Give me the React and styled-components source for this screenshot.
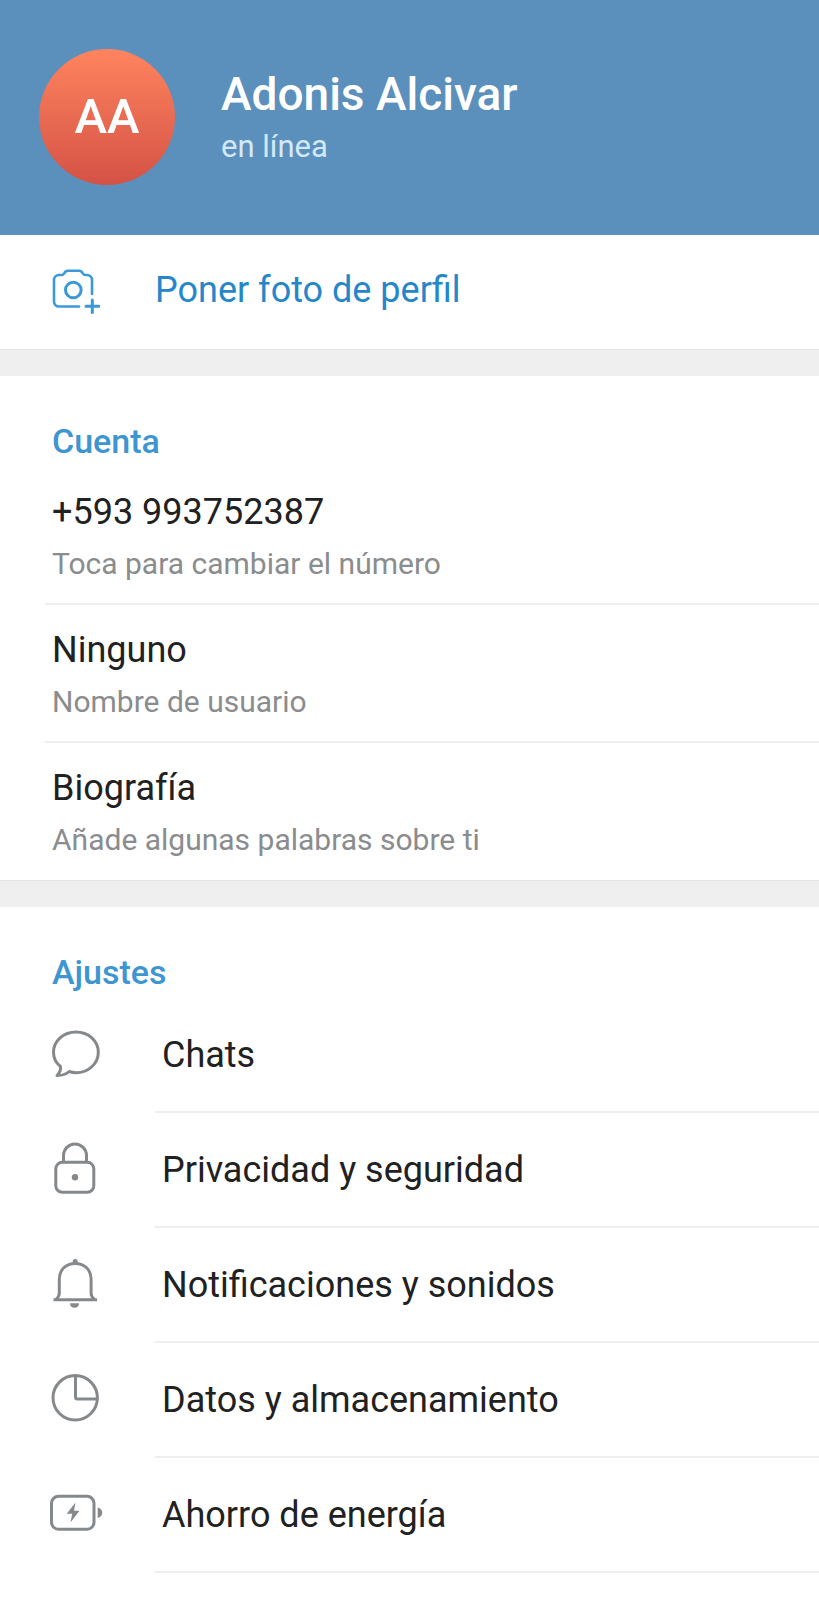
import React from "react";
import styled, { createGlobalStyle } from "styled-components";

const GlobalStyle = createGlobalStyle`
  *, *::before, *::after { box-sizing: border-box; }
  body {
    margin: 0;
    background: #ffffff;
    color: #212121;
    font-family: Roboto, "Liberation Sans", sans-serif;
  }
  h1, h2, p, ul { margin: 0; padding: 0; }
`;

const Page = styled.div`
  min-height: 100vh;
  background: #ffffff;
`;

const Header = styled.header`
  display: flex;
  align-items: center;
  gap: 46px;
  height: 235px;
  padding: 0 39px 2px;
  background: #5b8fbc;
  color: #ffffff;
`;

const Avatar = styled.div`
  flex: none;
  display: grid;
  place-items: center;
  width: 136px;
  height: 136px;
  border-radius: 50%;
  background: linear-gradient(#ff845e, #d45246);
  font-size: 49px;
  font-weight: 500;
  line-height: 56px;
`;

const Identity = styled.div`
  display: flex;
  flex-direction: column;
  gap: 4px;
`;

const Name = styled.h1`
  font-size: 46px;
  font-weight: 500;
  line-height: 56px;
`;

const Status = styled.p`
  font-size: 31px;
  line-height: 42px;
  color: #d3e9fa;
`;

const Section = styled.section`
  border-bottom: 26px solid #efefef;
  box-shadow: inset 0 -1px #e4e4e4;
  &:last-child { border-bottom: 0; box-shadow: none; }
`;

const SectionTitle = styled.h2`
  padding: 44px 52px 5px;
  font-size: 34px;
  font-weight: 500;
  line-height: 42px;
  color: #3d95d1;
`;

const RowButton = styled.button`
  display: block;
  width: 100%;
  margin: 0;
  padding: 0;
  border: 0;
  background: none;
  color: inherit;
  font: inherit;
  text-align: left;
  cursor: pointer;
`;

const PhotoButton = styled(RowButton)`
  display: flex;
  align-items: center;
  gap: 49px;
  height: 115px;
  padding: 0 46px 6px;
  font-size: 36px;
  line-height: 48px;
  color: #2587c9;
`;

const List = styled.ul`
  list-style: none;
`;

const FieldItem = styled.li`
  margin-left: 45px;
  border-bottom: 2px solid #eeeeee;
  &:last-child { border-bottom-color: transparent; }
`;

const FieldButton = styled(RowButton)`
  display: flex;
  flex-direction: column;
  gap: 8px;
  padding: 21px 7px 19px;
`;

const FieldValue = styled.span`
  font-size: 36px;
  line-height: 48px;
`;

const FieldHint = styled.span`
  font-size: 30px;
  line-height: 40px;
  color: #8a8c8e;
`;

const SettingButton = styled(RowButton)`
  display: flex;
  align-items: center;
  padding-left: 46px;
`;

const SettingLabel = styled.span`
  flex: 1;
  display: flex;
  align-items: center;
  height: 115px;
  margin-left: 49px;
  padding-left: 7px;
  border-bottom: 2px solid #eeeeee;
  font-size: 36px;
  line-height: 48px;
`;

const Icon = styled.svg.attrs({ viewBox: "0 0 60 60", "aria-hidden": true })`
  flex: none;
  width: 60px;
  height: 60px;
  fill: none;
  stroke: ${(p) => p.$color || "#85898c"};
  stroke-width: 3;
  stroke-linejoin: round;
  .solid { fill: #85898c; stroke: none; }
`;

const CameraIcon = () => (
  <Icon $color="#3b99d8" strokeLinecap="round">
    <path
      strokeWidth="2.6"
      d="M33 46.500H13a5 5 0 0 1-5-5V20a5 5 0 0 1 5-5h2.500c1.500 0 2-.5 2.700-1.700.9-1.700 1.800-2.500 3.800-2.500h11c2 0 2.900.8 3.800 2.500.7 1.200 1.200 1.700 2.700 1.700H41a5 5 0 0 1 5 5v14"
    />
    <circle cx="27.300" cy="30" r="7.800" />
    <path d="M46.300 40v12.600M40 46.300h12.800" />
  </Icon>
);

const ChatIcon = () => (
  <Icon>
    <path d="M14.500 40.500C10 37 7.500 32 7.500 26.300 7.500 15 17.500 6 30 6s22.300 9 22.300 20.300S42.500 46.700 30 46.700c-2.500 0-4.500-.4-6.700-1.200-3.300 3-8.300 4-12.300 4 2.500-2.500 4-5.500 3.500-9Z" />
  </Icon>
);

const LockIcon = () => (
  <Icon>
    <rect x="9.800" y="21.300" width="38" height="30" rx="6.500" />
    <path d="M17.500 21v-6.500a11.500 11.500 0 0 1 23 0V21" />
    <circle className="solid" cx="29" cy="36.200" r="3.200" />
  </Icon>
);

const BellIcon = () => (
  <Icon>
    <path d="M10 43.300c2-1.600 3.300-3 3.300-6V23.500C13.300 13.500 20 7.500 29.200 7.500s15.900 6 15.900 16v13.800c0 3 1.300 4.400 3.300 6" />
    <path d="M7.500 43.700h43.500" />
    <path className="solid" d="M26.700 7V5.500a2.500 2.500 0 0 1 5 0V7ZM24 47.300h9c0 3-2 4.500-4.500 4.500s-4.500-1.500-4.500-4.500Z" />
  </Icon>
);

const PieIcon = () => (
  <Icon>
    <circle cx="29.200" cy="26.800" r="22.200" />
    <path d="M29.500 5v21a2 2 0 0 0 2 2H51" />
  </Icon>
);

const BatteryIcon = () => (
  <Icon>
    <rect x="5.500" y="10.300" width="42.500" height="33" rx="7" />
    <path className="solid" d="M51.700 21.500c6 1 6 9.500 0 10.500ZM29.500 16.500 20.700 27.800h5.500L24.500 36.500 33.500 24.800h-5.500Z" />
  </Icon>
);

const fields = [
  { value: "+593 993752387", hint: "Toca para cambiar el número" },
  { value: "Ninguno", hint: "Nombre de usuario" },
  { value: "Biografía", hint: "Añade algunas palabras sobre ti" },
];

const settings = [
  { label: "Chats", Glyph: ChatIcon },
  { label: "Privacidad y seguridad", Glyph: LockIcon },
  { label: "Notificaciones y sonidos", Glyph: BellIcon },
  { label: "Datos y almacenamiento", Glyph: PieIcon },
  { label: "Ahorro de energía", Glyph: BatteryIcon },
];

export default function App() {
  return (
    <Page>
      <GlobalStyle />
      <Header>
        <Avatar>AA</Avatar>
        <Identity>
          <Name>Adonis Alcivar</Name>
          <Status>en línea</Status>
        </Identity>
      </Header>
      <main>
        <Section>
          <PhotoButton type="button">
            <CameraIcon />
            Poner foto de perfil
          </PhotoButton>
        </Section>
        <Section>
          <SectionTitle>Cuenta</SectionTitle>
          <List>
            {fields.map(({ value, hint }) => (
              <FieldItem key={value}>
                <FieldButton type="button">
                  <FieldValue>{value}</FieldValue>
                  <FieldHint>{hint}</FieldHint>
                </FieldButton>
              </FieldItem>
            ))}
          </List>
        </Section>
        <Section>
          <SectionTitle>Ajustes</SectionTitle>
          <List>
            {settings.map(({ label, Glyph }) => (
              <li key={label}>
                <SettingButton type="button">
                  <Glyph />
                  <SettingLabel>{label}</SettingLabel>
                </SettingButton>
              </li>
            ))}
          </List>
        </Section>
      </main>
    </Page>
  );
}
